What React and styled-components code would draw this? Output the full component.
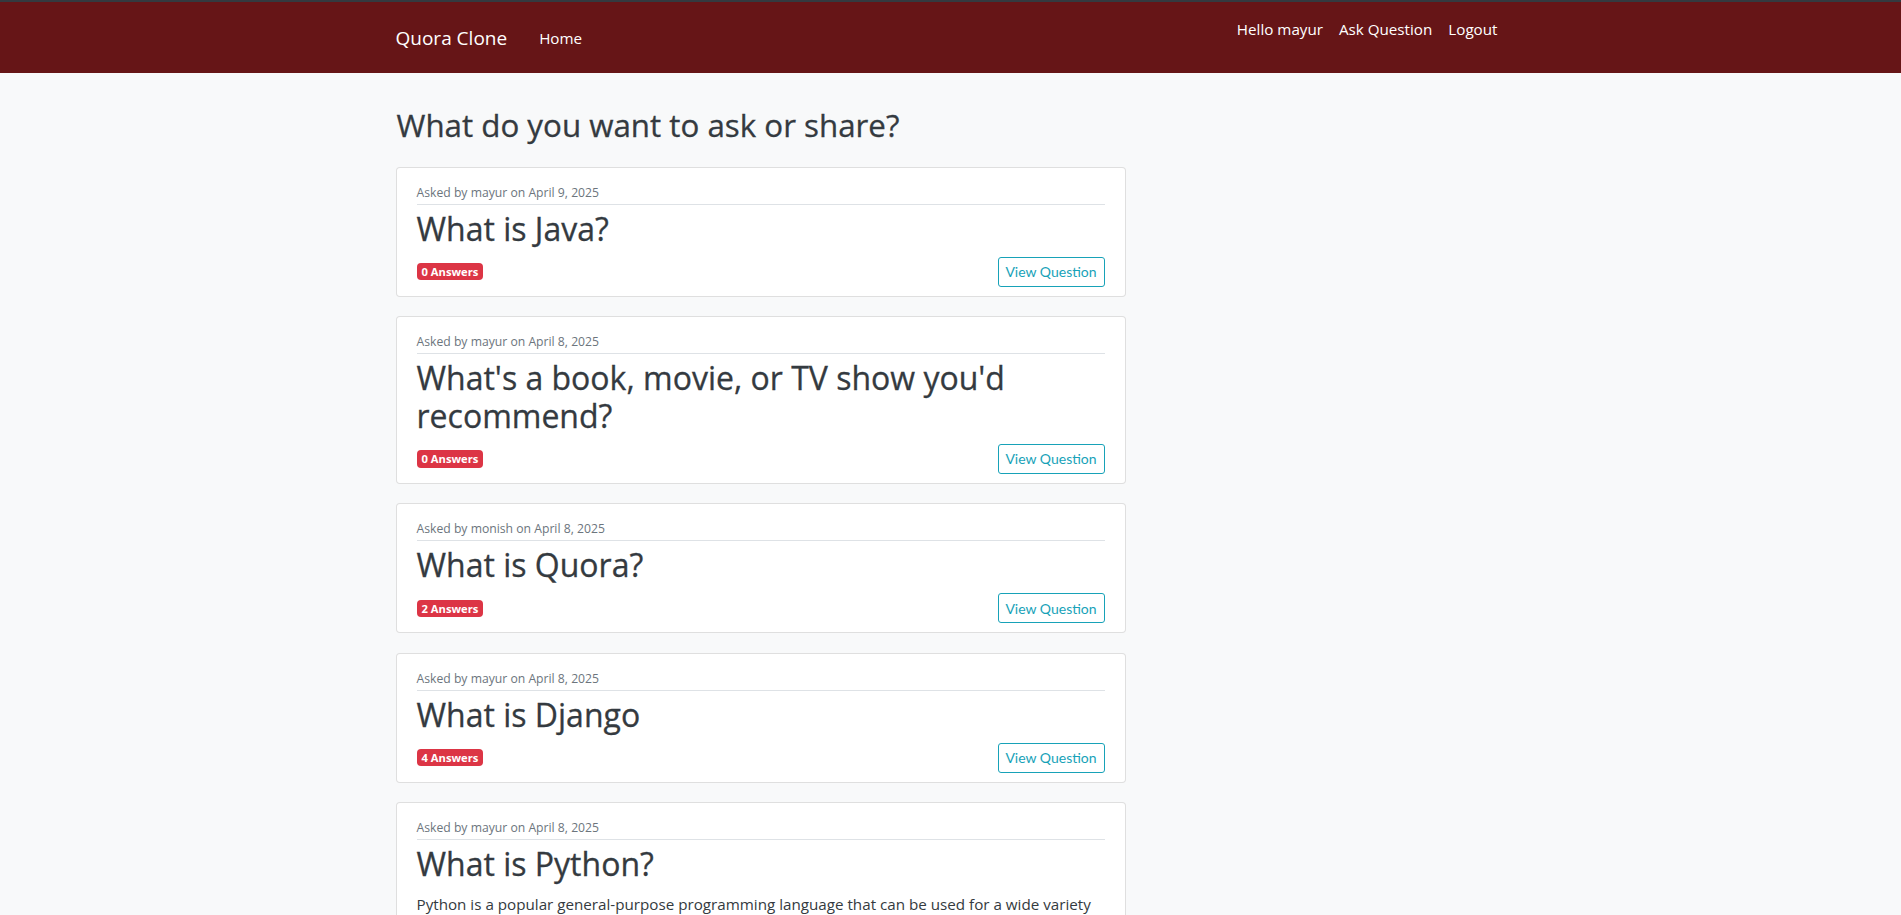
import React from "react";
import styled, { createGlobalStyle } from "styled-components";

const GlobalStyle = createGlobalStyle`
  body {
    margin: 0;
    background-color: #f8f9fa;
    font-family: "Open Sans", "Liberation Sans", sans-serif;
    color: #212529;
  }
`;

const questions = [
  {
    user: "mayur",
    date: "April 9, 2025",
    title: "What is Java?",
    answers: 0,
  },
  {
    user: "mayur",
    date: "April 8, 2025",
    title: "What's a book, movie, or TV show you'd recommend?",
    answers: 0,
  },
  {
    user: "monish",
    date: "April 8, 2025",
    title: "What is Quora?",
    answers: 2,
  },
  {
    user: "mayur",
    date: "April 8, 2025",
    title: "What is Django",
    answers: 4,
  },
  {
    user: "mayur",
    date: "April 8, 2025",
    title: "What is Python?",
    body:
      "Python is a popular general-purpose programming language that can be used for a wide variety of applications. It includes high-level data structures, dynamic typing, dynamic binding, and many more features that make it as useful for complex application development as it is for scripting or glue code.",
    answers: 3,
  },
];

const App = () => {
  return (
    <>
      <GlobalStyle />
      <Navbar>
        <NavInner>
          <LeftNav>
            <Brand href="#">Quora Clone</Brand>
            <NavLink href="#">Home</NavLink>
          </LeftNav>
          <RightNav>
            <NavLink href="#">Hello mayur</NavLink>
            <NavLink href="#">Ask Question</NavLink>
            <NavLink href="#">Logout</NavLink>
          </RightNav>
        </NavInner>
      </Navbar>
      <Container>
        <Column>
          <PageTitle>What do you want to ask or share?</PageTitle>
          {questions.map((q, i) => (
            <Card key={i}>
              <Meta>
                Asked by {q.user} on {q.date}
              </Meta>
              <QuestionTitle>{q.title}</QuestionTitle>
              {q.body && <Body>{q.body}</Body>}
              <CardFooter>
                <Badge>{q.answers} Answers</Badge>
                <ViewButton>View Question</ViewButton>
              </CardFooter>
            </Card>
          ))}
        </Column>
      </Container>
    </>
  );
};

const Navbar = styled.nav`
  background-color: #661517;
  border-top: 2px solid #343a40;
  height: 71px;
`;

const NavInner = styled.div`
  width: 1140px;
  margin: 0 auto;
  padding: 0 15px;
  box-sizing: border-box;
  height: 100%;
  display: flex;
  justify-content: space-between;
`;

const LeftNav = styled.div`
  display: flex;
  align-items: center;
  padding-top: 1px;
`;

const RightNav = styled.div`
  display: flex;
  align-items: flex-start;
  padding-top: 17px;
`;

const Brand = styled.a`
  color: #fff;
  font-size: 19px;
  text-decoration: none;
  margin-right: 24px;
`;

const NavLink = styled.a`
  color: #fff;
  font-size: 15.2px;
  padding: 0 8px;
  text-decoration: none;
`;

const Container = styled.div`
  width: 1140px;
  margin: 0 auto;
  padding: 0 15px;
  box-sizing: border-box;
`;

const Column = styled.div`
  width: 730px;
  padding-top: 34px;
`;

const PageTitle = styled.h3`
  font-size: 31.3px;
  font-weight: 400;
  line-height: 1.2;
  color: #343a40;
  -webkit-text-stroke: 0.3px #343a40;
  margin: 0 0 22px 1px;
`;

const Card = styled.div`
  background: #fff;
  border: 1px solid rgba(0, 0, 0, 0.125);
  border-radius: 4px;
  padding: 13px 20px 9px;
  margin-bottom: 19.4px;
`;

const Meta = styled.div`
  font-size: 12.2px;
  color: #6c757d;
  line-height: 23px;
  border-bottom: 1px solid #dee2e6;
`;

const QuestionTitle = styled.h2`
  font-size: 32px;
  font-weight: 400;
  line-height: 38px;
  color: #343a40;
  -webkit-text-stroke: 0.3px #343a40;
  margin: 5px 0 9px;
`;

const Body = styled.p`
  font-size: 15.2px;
  line-height: 24px;
  color: #343a40;
  margin: 0 0 12px;
`;

const CardFooter = styled.div`
  display: flex;
  justify-content: space-between;
  align-items: center;
`;

const Badge = styled.span`
  background-color: #dc3545;
  color: #fff;
  font-size: 11.2px;
  font-weight: 700;
  line-height: 1;
  padding: 3px 5px;
  border-radius: 4px;
`;

const ViewButton = styled.button`
  font-family: Lato, "Open Sans", sans-serif;
  font-size: 14px;
  color: #17a2b8;
  background: transparent;
  border: 1px solid #17a2b8;
  border-radius: 3px;
  padding: 0;
  height: 30px;
  width: 107px;
  white-space: nowrap;
  cursor: pointer;
`;

export default App;
